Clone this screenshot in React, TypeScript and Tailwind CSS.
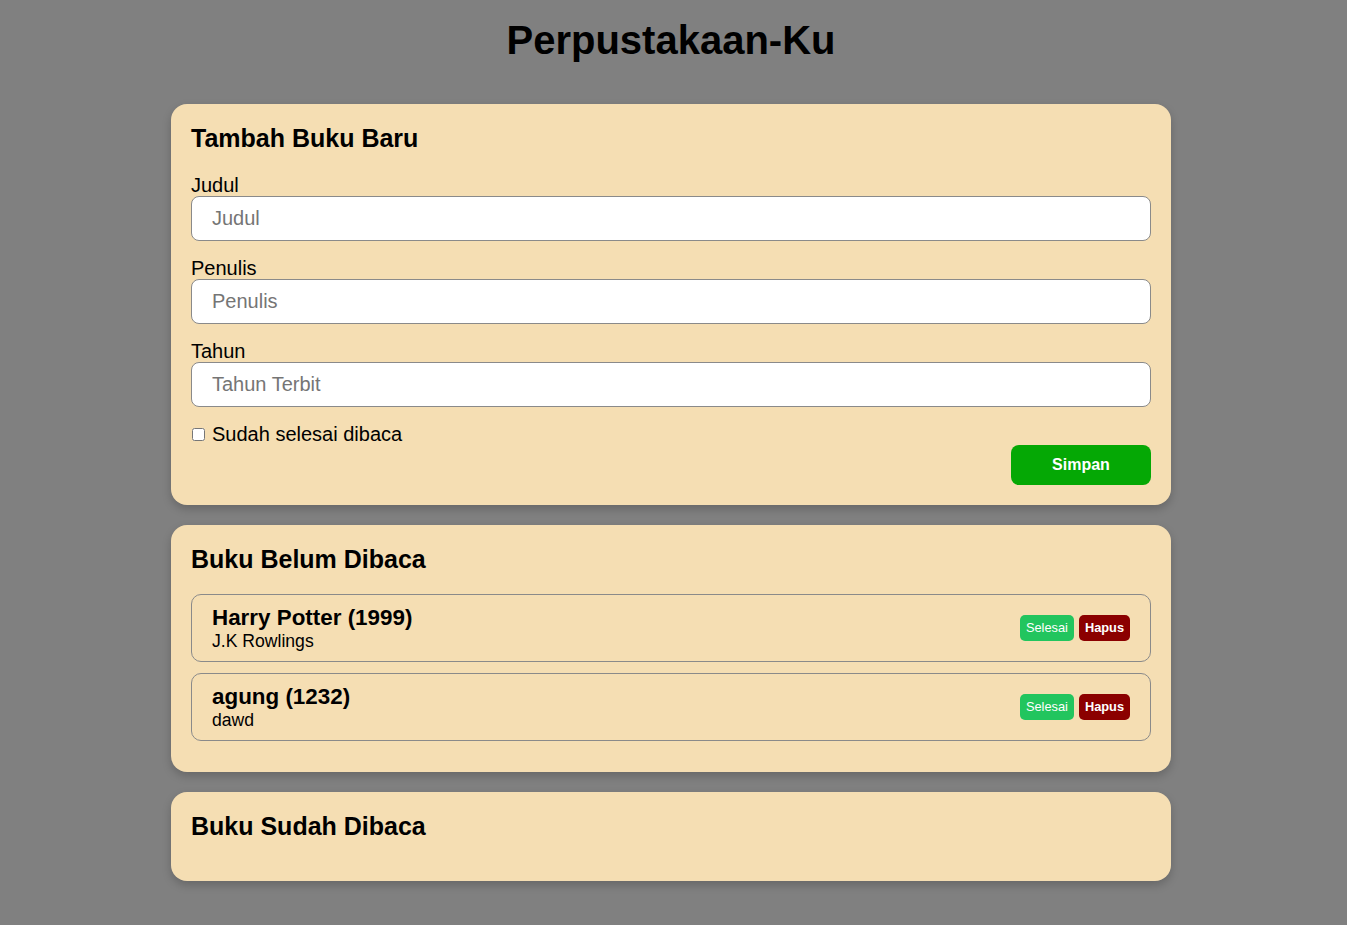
import React from "react";

type Book = { id: number; title: string; author: string; year: number };

const unread: Book[] = [
  { id: 1, title: "Harry Potter", author: "J.K Rowlings", year: 1999 },
  { id: 2, title: "agung", author: "dawd", year: 1232 },
];

function Field({ label, placeholder }: { label: string; placeholder: string }) {
  return (
    <div className="mb-4">
      <label className="block text-[20px] leading-[22px]">{label}</label>
      <input
        type="text"
        placeholder={placeholder}
        className="block w-full h-[45px] px-5 text-[20px] bg-white border border-[#8a8a8a] rounded-lg outline-none placeholder:text-[#757575]"
      />
    </div>
  );
}

function BookItem({ book }: { book: Book }) {
  return (
    <article className="flex items-center justify-between border border-[#8a8a8a] rounded-[10px] px-5 h-[68px] mb-[11px]">
      <div>
        <h3 className="text-[22.4px] font-bold leading-[26px]">
          {book.title} ({book.year})
        </h3>
        <p className="text-[17.6px] leading-[20px]">{book.author}</p>
      </div>
      <div className="flex gap-[5px]">
        <button className="px-[6px] py-[6px] text-[12.8px] leading-[1.15] text-white bg-[#22c55e] rounded-[5px]">
          Selesai
        </button>
        <button className="px-[6px] py-[6px] text-[12.8px] leading-[1.15] font-bold text-white bg-[#8b0000] rounded-[5px]">
          Hapus
        </button>
      </div>
    </article>
  );
}

export default function App() {
  return (
    <div className="min-h-screen bg-[#808080] text-black font-['Liberation_Sans',Arial,sans-serif] leading-[1.15] pr-[5px]">
      <h1 className="pt-[17px] mb-[41px] text-center text-[40px] font-bold leading-[1.15]">
        Perpustakaan-Ku
      </h1>

      <div className="w-[1000px] mx-auto flex flex-col gap-5">
        {/* Form */}
        <section className="bg-[#f5deb3] rounded-2xl p-5 shadow-[0_4px_10px_rgba(0,0,0,0.2)]">
          <h2 className="text-[25px] font-bold leading-[28px] mb-[22px]">Tambah Buku Baru</h2>
          <form onSubmit={(e) => e.preventDefault()}>
            <Field label="Judul" placeholder="Judul" />
            <Field label="Penulis" placeholder="Penulis" />
            <Field label="Tahun" placeholder="Tahun Terbit" />
            <label className="flex items-center gap-[7px] text-[20px] leading-[22px]">
              <input type="checkbox" className="w-[13px] h-[13px] ml-[1px]" />
              Sudah selesai dibaca
            </label>
            <div className="flex justify-end">
              <button
                type="submit"
                className="w-[140px] h-10 rounded-lg bg-[#05a805] text-white font-bold text-base"
              >
                Simpan
              </button>
            </div>
          </form>
        </section>

        {/* Unread */}
        <section className="bg-[#f5deb3] rounded-2xl px-5 pt-5 pb-5 shadow-[0_4px_10px_rgba(0,0,0,0.2)]">
          <h2 className="text-[25px] font-bold leading-[28px] mb-[21px]">Buku Belum Dibaca</h2>
          {unread.map((b) => (
            <BookItem key={b.id} book={b} />
          ))}
        </section>

        {/* Read */}
        <section className="bg-[#f5deb3] rounded-2xl p-5 shadow-[0_4px_10px_rgba(0,0,0,0.2)]">
          <h2 className="text-[25px] font-bold leading-[28px] mb-[21px]">Buku Sudah Dibaca</h2>
        </section>
      </div>
    </div>
  );
}
